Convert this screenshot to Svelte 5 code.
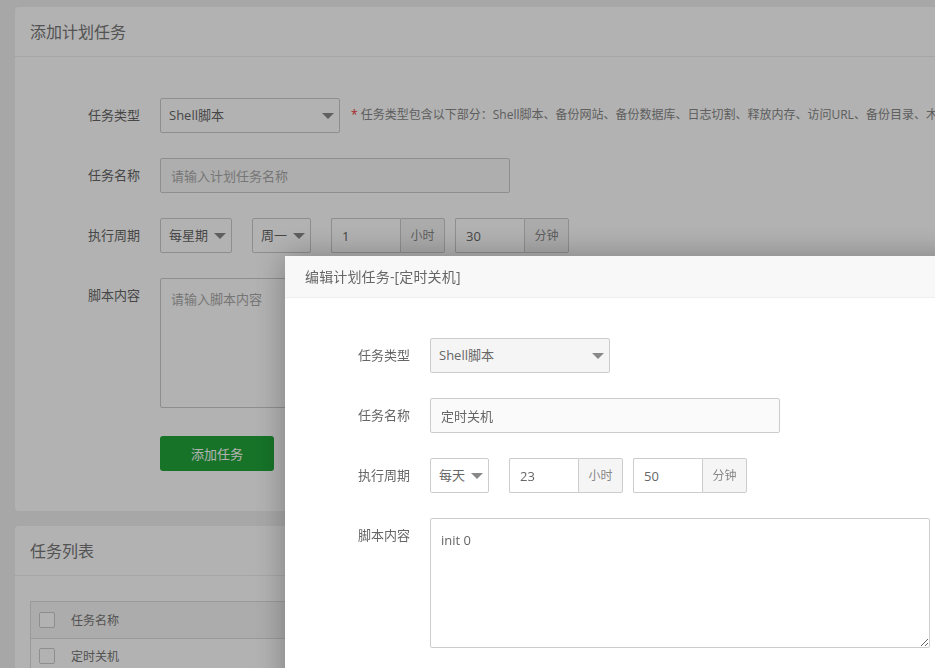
<script>
	const hint = '任务类型包含以下部分：Shell脚本、备份网站、备份数据库、日志切割、释放内存、访问URL、备份目录、木马查杀、同步时间';
	const rows = ['定时关机'];
</script>

<div class="page">
	<section class="card">
		<h2 class="card-title">添加计划任务</h2>
		<div class="form add-form">
			<div class="row">
				<span class="label">任务类型</span>
				<div class="select type-select"><span>Shell脚本</span><i class="caret"></i></div>
				<p class="hint"><em>*</em> {hint}</p>
			</div>
			<div class="row">
				<span class="label">任务名称</span>
				<input class="text name-input" placeholder="请输入计划任务名称" />
			</div>
			<div class="row">
				<span class="label">执行周期</span>
				<div class="select week-select"><span>每星期</span><i class="caret"></i></div>
				<div class="select day-select"><span>周一</span><i class="caret"></i></div>
				<div class="group"><input class="text num" value="1" /><span class="addon">小时</span></div>
				<div class="group"><input class="text num" value="30" /><span class="addon">分钟</span></div>
			</div>
			<div class="row tall">
				<span class="label">脚本内容</span>
				<textarea class="text script" placeholder="请输入脚本内容"></textarea>
			</div>
			<div class="actions">
				<button class="primary">添加任务</button>
			</div>
		</div>
	</section>

	<section class="card">
		<h2 class="card-title">任务列表</h2>
		<div class="list">
			<table>
				<thead>
					<tr>
						<th class="check"><i class="box"></i></th>
						<th>任务名称</th>
					</tr>
				</thead>
				<tbody>
					{#each rows as row}
						<tr>
							<td class="check"><i class="box"></i></td>
							<td>{row}</td>
						</tr>
					{/each}
				</tbody>
			</table>
		</div>
	</section>
</div>

<div class="shade"></div>

<div class="modal">
	<div class="modal-title">编辑计划任务-[定时关机]</div>
	<div class="form modal-form">
		<div class="row">
			<span class="label">任务类型</span>
			<div class="select type-select disabled"><span>Shell脚本</span><i class="caret"></i></div>
		</div>
		<div class="row">
			<span class="label">任务名称</span>
			<input class="text name-input" value="定时关机" />
		</div>
		<div class="row">
			<span class="label">执行周期</span>
			<div class="select daily-select"><span>每天</span><i class="caret"></i></div>
			<div class="group"><input class="text num" value="23" /><span class="addon">小时</span></div>
			<div class="group"><input class="text num" value="50" /><span class="addon">分钟</span></div>
		</div>
		<div class="row tall">
			<span class="label">脚本内容</span>
			<textarea class="text script">init 0</textarea>
		</div>
	</div>
</div>

<style>
	:global(body) {
		background: #f0f0f0;
		height: 668px;
		overflow: hidden;
		font-family: 'Open Sans', 'Noto Sans CJK SC', sans-serif;
		color: #666;
	}

	.page {
		width: 1100px;
		padding: 7px 0 0 15px;
	}

	.card {
		background: #fff;
		border-radius: 4px;
		margin-bottom: 15px;
	}

	.card-title {
		margin: 0;
		height: 49px;
		line-height: 51px;
		padding-left: 15px;
		font-size: 16px;
		font-weight: 400;
		color: #777;
		border-bottom: 1px solid #eee;
	}

	.form {
		padding-left: 15px;
	}

	.add-form {
		padding-top: 41px;
		padding-bottom: 40px;
	}

	.row {
		display: flex;
		align-items: flex-start;
		margin-bottom: 25px;
		white-space: nowrap;
	}

	.row.tall {
		margin-bottom: 28px;
	}

	.label {
		width: 110px;
		margin-right: 20px;
		flex: none;
		text-align: right;
		font-size: 13px;
		line-height: 35px;
		color: #666;
	}

	.select {
		position: relative;
		box-sizing: border-box;
		flex: none;
		height: 35px;
		line-height: 33px;
		padding-left: 8px;
		margin-right: 20px;
		font-size: 13px;
		color: #666;
		background: #fff;
		border: 1px solid #ccc;
		border-radius: 2px;
	}

	.select.disabled {
		background: #f5f5f5;
	}

	.type-select {
		width: 180px;
		margin-right: 10px;
	}

	.week-select {
		width: 72px;
	}

	.day-select {
		width: 59px;
	}

	.daily-select {
		width: 59px;
	}

	.caret {
		position: absolute;
		right: 5px;
		top: 14px;
		width: 0;
		height: 0;
		border-left: 6px solid transparent;
		border-right: 6px solid transparent;
		border-top: 6px solid #888;
	}

	.hint {
		margin: 0 0 0 1px;
		font-size: 12px;
		line-height: 33px;
		color: #888;
	}

	.hint em {
		font-style: normal;
		color: #e33;
	}

	.text {
		box-sizing: border-box;
		font-family: inherit;
		font-size: 13px;
		color: #666;
		padding: 0 10px;
		background: #fff;
		border: 1px solid #ccc;
		border-radius: 2px;
		outline: none;
	}

	.text::placeholder {
		color: #aaa;
	}

	.name-input {
		width: 350px;
		height: 35px;
		background: #fafafa;
	}

	.group {
		display: flex;
		flex: none;
		margin-right: 10px;
	}

	.num {
		width: 69px;
		height: 35px;
		border-right: 0;
		border-radius: 2px 0 0 2px;
	}

	.addon {
		box-sizing: border-box;
		width: 45px;
		height: 35px;
		line-height: 33px;
		text-align: center;
		font-size: 12px;
		color: #888;
		background: #f5f5f5;
		border: 1px solid #ccc;
		border-radius: 0 2px 2px 0;
	}

	.script {
		display: block;
		flex: none;
		width: 500px;
		height: 130px;
		padding: 11px 10px 10px;
		line-height: 20px;
	}

	.add-form .script {
		padding-top: 10px;
	}

	.actions {
		padding-left: 130px;
	}

	.primary {
		display: block;
		width: 114px;
		height: 35px;
		padding: 0;
		font-family: inherit;
		font-size: 13px;
		color: #fff;
		background: #20a53a;
		border: 0;
		border-radius: 3px;
	}

	.list {
		padding: 25px 0 0 15px;
	}

	table {
		width: 100%;
		border-collapse: collapse;
		font-size: 12px;
		color: #777;
		border-left: 1px solid #ddd;
	}

	th,
	td {
		padding: 0;
		text-align: left;
		font-weight: 400;
		border-top: 1px solid #ddd;
	}

	th {
		height: 36px;
		background: #f6f6f6;
		border-bottom: 1px solid #ddd;
	}

	td {
		height: 34px;
	}

	.check {
		width: 32px;
		padding-left: 8px;
	}

	.box {
		display: block;
		box-sizing: border-box;
		width: 16px;
		height: 16px;
		border: 1px solid #ccc;
		border-radius: 2px;
		background: #fff;
	}

	.shade {
		position: fixed;
		inset: 0;
		background: rgba(0, 0, 0, 0.3);
	}

	.modal {
		position: fixed;
		left: 285px;
		top: 256px;
		width: 700px;
		height: 560px;
		background: #fff;
		box-shadow: 0 0 30px rgba(0, 0, 0, 0.3);
	}

	.modal-title {
		height: 41px;
		line-height: 41px;
		padding-left: 20px;
		font-size: 14px;
		letter-spacing: 0.15px;
		color: #666;
		background: #f8f8f8;
		border-bottom: 1px solid #eee;
	}

	.modal-form {
		padding-top: 40px;
	}
</style>
